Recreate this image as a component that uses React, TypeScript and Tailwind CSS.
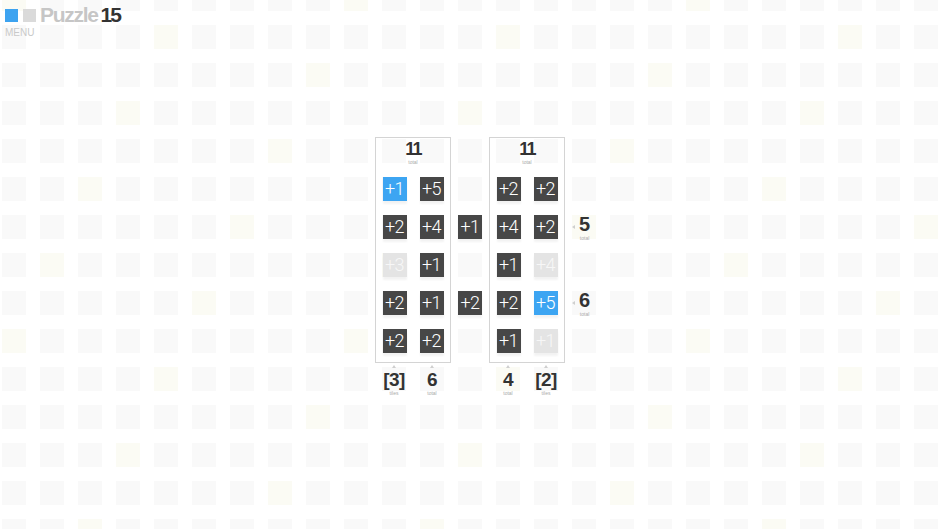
import React from "react";

type Kind = "dark" | "blue" | "light";
type Tile = { v: string; k: Kind } | null;

const d = (v: string): Tile => ({ v, k: "dark" });
const b = (v: string): Tile => ({ v, k: "blue" });
const l = (v: string): Tile => ({ v, k: "light" });

const leftBoard: Tile[][] = [
  [b("+1"), d("+5")],
  [d("+2"), d("+4")],
  [l("+3"), d("+1")],
  [d("+2"), d("+1")],
  [d("+2"), d("+2")],
];

const rightBoard: Tile[][] = [
  [d("+2"), d("+2")],
  [d("+4"), d("+2")],
  [d("+1"), l("+4")],
  [d("+2"), b("+5")],
  [d("+1"), l("+1")],
];

const middle: Tile[] = [null, d("+1"), null, d("+2"), null];
const sideTotals: (string | null)[] = [null, "5", null, "6", null];

const tileClass: Record<Kind, string> = {
  dark: "bg-[#474747] text-white",
  blue: "bg-[#3da5f2] text-white",
  light: "bg-[#e4e4e4] text-[#f7f7f7]",
};

function Backdrop() {
  const rows = Array.from({ length: 15 });
  const cols = Array.from({ length: 25 });
  return (
    <div className="absolute inset-0 overflow-hidden">
      <div className="-ml-[5px] -mt-[20px] flex w-[950px] flex-col">
        {rows.map((_, r) => (
          <div key={r} className="flex">
            {cols.map((_, c) => {
              const warm = (r * 7 + c * 5) % 9 === 0;
              return (
                <div key={c} className="h-[38px] w-[38px] p-[7px]">
                  <div
                    className={
                      warm
                        ? "h-[24px] w-[24px] bg-[#fbfbf4]"
                        : "h-[24px] w-[24px] bg-[#f9f9f9]"
                    }
                  />
                </div>
              );
            })}
          </div>
        ))}
      </div>
    </div>
  );
}

function TileCell({ t }: { t: Tile }) {
  return (
    <div className="flex h-[38px] items-center justify-center">
      {t && (
        <div
          className={`flex h-[24px] w-[24px] items-center justify-center font-['Roboto',sans-serif] text-[18px] font-light leading-none tracking-[-0.6px] shadow-[0_3px_2px_rgba(0,0,0,0.05)] ${tileClass[t.k]}`}
        >
          {t.v}
        </div>
      )}
    </div>
  );
}

function Header({ n }: { n: string }) {
  return (
    <div className="flex h-[32px] flex-col items-center pt-[2px]">
      <span className="font-['Liberation_Sans',sans-serif] text-[18px] font-bold leading-[19px] tracking-[-1.8px] text-[#333]">
        {n}
      </span>
      <span className="font-['Liberation_Sans',sans-serif] text-[5px] leading-[6px] text-[#aaa]">
        total
      </span>
    </div>
  );
}

function Board({ rows }: { rows: Tile[][] }) {
  return (
    <div className="mt-[5px] h-[226px] w-[76px] border border-[#d4d4d4]">
      <Header n="11" />
      <div className="grid grid-cols-2">
        {rows.map((row, i) =>
          row.map((t, j) => <TileCell key={`${i}-${j}`} t={t} />),
        )}
      </div>
    </div>
  );
}

function BottomLabel({ n, sub }: { n: string; sub: string }) {
  return (
    <div className="flex w-[38px] flex-col items-center">
      <div className="mt-[2px] h-0 w-0 border-x-[2.5px] border-b-[3px] border-x-transparent border-b-[#cfcfcf]" />
      <span className="mt-[1px] font-['Liberation_Sans',sans-serif] text-[19px] font-bold leading-[21px] tracking-[-0.5px] text-[#333]">
        {n}
      </span>
      <span className="font-['Liberation_Sans',sans-serif] text-[5px] leading-[6px] text-[#aaa]">
        {sub}
      </span>
    </div>
  );
}

export default function App() {
  return (
    <div className="relative h-[529px] w-full overflow-hidden bg-white">
      <Backdrop />

      <div className="absolute left-[5px] top-[5px] flex flex-col">
        <div className="flex items-center">
          <div className="mt-[1px] h-[13px] w-[13px] bg-[#3da3f0]" />
          <div className="ml-[5px] mt-[1px] h-[13px] w-[13px] bg-[#dadada]" />
          <span className="ml-[4px] font-['Liberation_Sans',sans-serif] text-[21px] font-bold leading-[20px] tracking-[-1.3px] text-[#c6c6c6]">
            Puzzle
          </span>
          <span className="ml-[3px] font-['Liberation_Sans',sans-serif] text-[21px] font-bold leading-[20px] tracking-[-2px] text-[#333]">
            15
          </span>
        </div>
        <span className="mt-[3px] font-['Liberation_Sans',sans-serif] text-[10px] leading-[10px] text-[#c9c9c9]">
          MENU
        </span>
      </div>

      <div className="relative flex h-full items-center justify-center">
        <div className="flex h-[266px] flex-col">
          <div className="flex">
            <div className="w-[38px]" />
            <Board rows={leftBoard} />
            <div className="flex w-[38px] flex-col pt-[38px]">
              {middle.map((t, i) => (
                <TileCell key={i} t={t} />
              ))}
            </div>
            <Board rows={rightBoard} />
            <div className="flex w-[38px] flex-col pt-[38px]">
              {sideTotals.map((s, i) => (
                <div key={i} className="flex h-[38px] items-center pl-[7px]">
                  {s && (
                    <>
                      <div className="h-0 w-0 border-y-[2.5px] border-r-[3px] border-y-transparent border-r-[#cfcfcf]" />
                      <div className="ml-[4px] flex flex-col items-center pt-[1px]">
                        <span className="font-['Liberation_Sans',sans-serif] text-[20px] font-bold leading-[21px] text-[#333]">
                          {s}
                        </span>
                        <span className="font-['Liberation_Sans',sans-serif] text-[5px] leading-[6px] text-[#aaa]">
                          total
                        </span>
                      </div>
                    </>
                  )}
                </div>
              ))}
            </div>
          </div>
          <div className="flex">
            <div className="w-[38px]" />
            <BottomLabel n="[3]" sub="tiles" />
            <BottomLabel n="6" sub="total" />
            <div className="w-[38px]" />
            <BottomLabel n="4" sub="total" />
            <BottomLabel n="[2]" sub="tiles" />
          </div>
        </div>
      </div>
    </div>
  );
}
